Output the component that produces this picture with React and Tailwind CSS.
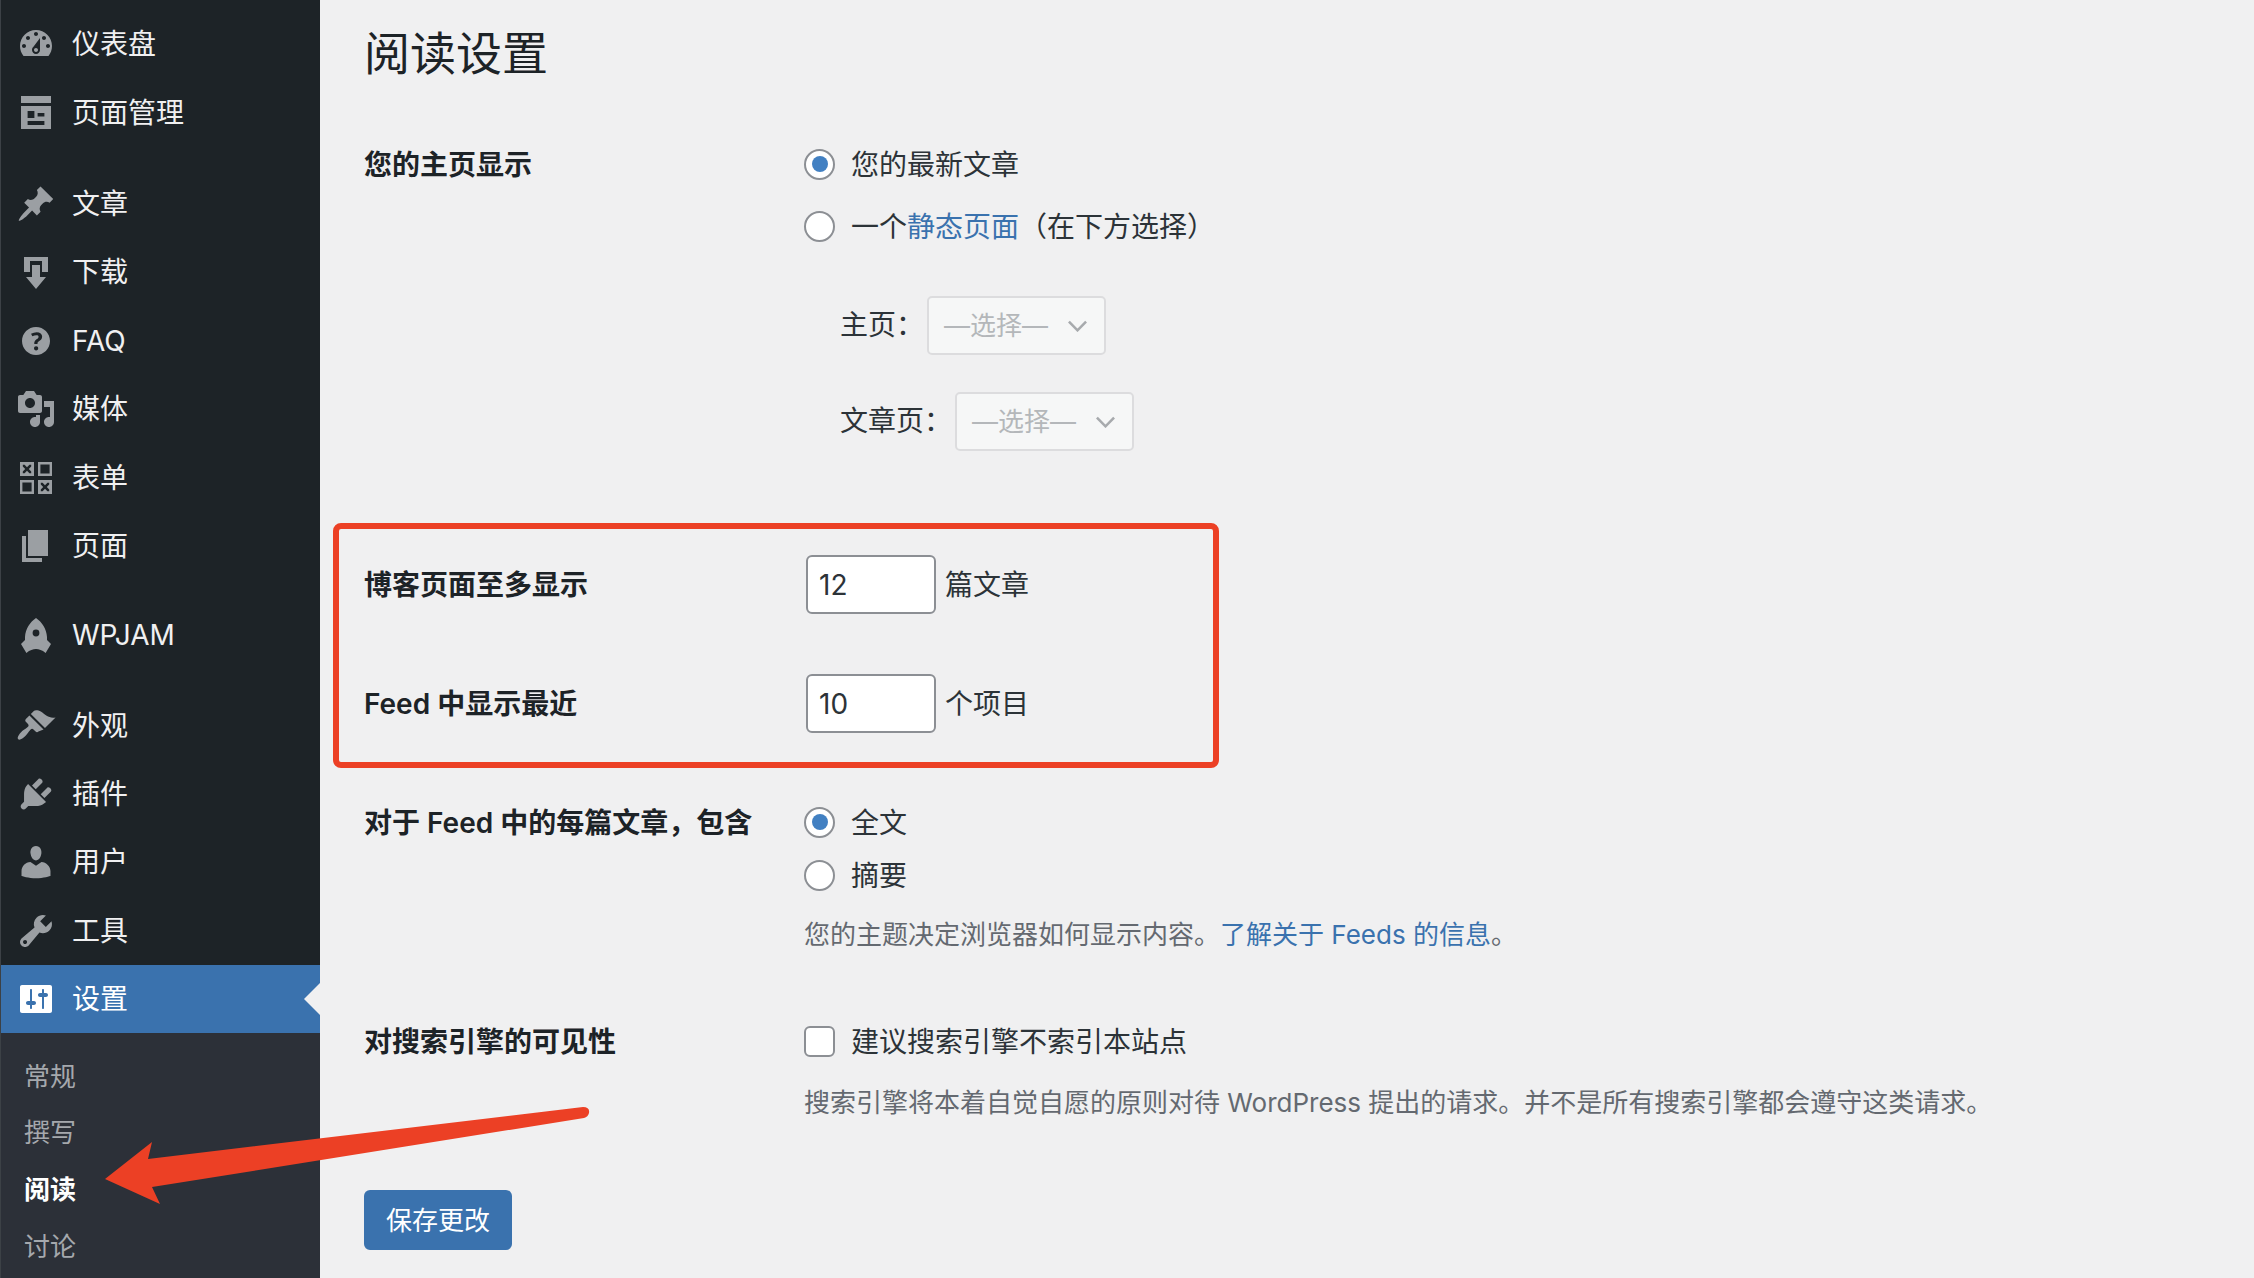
import React from 'react';

const icons = {
  dashboard: (
    <path fillRule="evenodd" d="M3.76 16h12.48c1.1-1.37 1.76-3.11 1.76-5 0-4.42-3.58-8-8-8s-8 3.58-8 8c0 1.89.66 3.63 1.76 5zM10 4c.55 0 1 .45 1 1s-.45 1-1 1-1-.45-1-1 .45-1 1-1zM6 6c.55 0 1 .45 1 1s-.45 1-1 1-1-.45-1-1 .45-1 1-1zm8 0c.55 0 1 .45 1 1s-.45 1-1 1-1-.45-1-1 .45-1 1-1zm-5.37 5.55L12 7v6c0 1.1-.9 2-2 2s-2-.9-2-2c0-.57.24-1.08.63-1.45zM4 10c.55 0 1 .45 1 1s-.45 1-1 1-1-.45-1-1 .45-1 1-1zm12 0c.55 0 1 .45 1 1s-.45 1-1 1-1-.45-1-1 .45-1 1-1zm-5 3c0-.55-.45-1-1-1s-1 .45-1 1 .45 1 1 1 1-.45 1-1z" />
  ),
  manager: (
    <path fillRule="evenodd" d="M2.5 1.5h15V5h-15zM2.5 6.5h15V18h-15zM5.8 9v3.5h3.4V9zM10.8 10v1.7h3.4V10zM5.8 14v2h8.4v-2z" />
  ),
  pin: (
    <path d="M10.44 3.02l1.82-1.82 6.36 6.35-1.83 1.82c-1.05-.68-2.48-.57-3.41.36l-.75.75c-.92.93-1.04 2.35-.35 3.41l-1.83 1.82-2.41-2.41-2.8 2.79c-.42.42-3.38 2.71-3.8 2.29s1.86-3.39 2.28-3.81l2.79-2.79L4.1 9.36l1.83-1.82c1.05.69 2.48.57 3.4-.36l.75-.75c.93-.92 1.05-2.35.36-3.41z" />
  ),
  download: (
    <path d="M4 2.5h12V10h-3V4.5H7V10H4zM8 6.5h4v6h3l-5 6-5-6h3z" />
  ),
  help: (
    <path fillRule="evenodd" d="M17 10c0-3.87-3.13-7-7-7s-7 3.13-7 7 3.13 7 7 7 7-3.13 7-7zm-6.3 1.48H9.14v-.43c0-.38.08-.7.24-.98s.46-.57.88-.89c.41-.29.68-.53.81-.71.14-.18.2-.39.2-.62 0-.25-.09-.44-.28-.58-.19-.13-.45-.19-.79-.19-.59 0-1.26.19-2.03.58l-.64-1.28c.89-.5 1.84-.75 2.84-.75.82 0 1.47.2 1.96.59.48.4.73.92.73 1.58 0 .44-.1.82-.3 1.14-.2.33-.58.69-1.14 1.09-.38.28-.62.49-.72.64-.1.15-.15.34-.15.58v.23zm-1.41 2.95c-.19-.18-.28-.44-.28-.77 0-.35.09-.61.27-.79s.44-.27.78-.27c.33 0 .59.09.77.27.18.19.27.45.27.79 0 .33-.09.58-.27.77-.19.19-.45.28-.77.28-.33 0-.59-.09-.77-.28z" />
  ),
  media: (
    <path fillRule="evenodd" d="M13 11V4c0-.55-.45-1-1-1h-1.67L9 1H5L3.67 3H2c-.55 0-1 .45-1 1v7c0 .55.45 1 1 1h10c.55 0 1-.45 1-1zM7 4.5c1.38 0 2.5 1.12 2.5 2.5S8.38 9.5 7 9.5 4.5 8.38 4.5 7 5.62 4.5 7 4.5zM14 6h5v10.5c0 1.38-1.12 2.5-2.5 2.5S14 17.88 14 16.5s1.12-2.5 2.5-2.5c.17 0 .34.02.5.05V9h-3V6zm-4 8.05V13h2v3.5c0 1.38-1.12 2.5-2.5 2.5S7 17.88 7 16.5 8.12 14 9.5 14c.17 0 .34.02.5.05z" />
  ),
  forms: (
    <>
      <path fillRule="evenodd" d="M2 2h7v7H2zM3.4 3.4v.9L4.6 5.5 3.4 6.7v.9h.9l1.2-1.2 1.2 1.2h.9v-.9L6.4 5.5l1.2-1.2v-.9h-.9L5.5 4.6 4.3 3.4zM11 11h7v7h-7zM12.4 12.4v.9l1.2 1.2-1.2 1.2v.9h.9l1.2-1.2 1.2 1.2h.9v-.9l-1.2-1.2 1.2-1.2v-.9h-.9l-1.2 1.2-1.2-1.2z" />
      <path fillRule="evenodd" d="M11 2h7v7h-7zM12.2 3.2v4.6h4.6V3.2zM2 11h7v7H2zM3.2 12.2v4.6h4.6v-4.6z" />
    </>
  ),
  page: <path d="M6 15V2h10v13H6zm-1 1h8v2H3V5h2v11z" />,
  rocket: (
    <path fillRule="evenodd" d="M10 1.5c3 2 5.3 5.5 5.5 9.5v1.5l2 2L14.8 19c-1.800-1.500-3.300-2-4.800-2s-3 .5-4.800 2L2.500 14.500l2-2V11C4.700 7 7 3.500 10 1.500zM10 7.300a1.700 1.700 0 1 0 0 3.400 1.700 1.700 0 0 0 0-3.400z" />
  ),
  brush: (
    <path d="M14.48 11.06L7.41 3.99l1.5-1.5c.5-.56 2.3-.47 3.51.32 1.21.8 1.43 1.28 2.91 2.1 1.18.64 2.45 1.26 4.45.85zm-.71.71L6.7 4.7 4.93 6.47c-.39.39-.39 1.02 0 1.41l1.06 1.06c.39.39.39 1.03 0 1.42-.6.6-1.43 1.11-2.21 1.69-.35.26-.7.53-1.01.84-1.34 1.34-2.37 3-1.67 3.71.71.7 2.36-.33 3.7-1.67.31-.31.58-.66.84-1.01.58-.78 1.09-1.61 1.69-2.21.39-.39 1.02-.39 1.41 0l1.06 1.06c.39.39 1.02.39 1.41 0z" />
  ),
  plugin: (
    <path d="M13.11 4.36L9.87 7.6 8 5.73l3.24-3.24c.35-.34 1.05-.2 1.56.32.52.51.66 1.21.31 1.55zm-8 1.77l.91-1.12 9.01 9.01-1.19.84c-.71.71-2.63 1.16-3.82 1.16H6.14L4.9 17.26c-.59.59-1.54.59-2.12 0-.59-.58-.59-1.53 0-2.12l1.24-1.24v-3.88c0-1.13.4-3.19 1.09-3.89zm7.26 3.97l3.24-3.24c.34-.35 1.04-.21 1.55.31.52.51.66 1.21.31 1.55l-3.24 3.25z" />
  ),
  user: (
    <path d="M10 9.25c-2.27 0-2.73-3.44-2.73-3.44C7 4.02 7.82 2 9.97 2c2.16 0 2.98 2.02 2.71 3.81 0 0-.41 3.44-2.68 3.44zm0 2.57L12.72 10c2.39 0 4.52 2.33 4.52 4.53v2.49s-3.65 1.13-7.24 1.13c-3.65 0-7.24-1.13-7.24-1.13v-2.49c0-2.25 1.94-4.48 4.47-4.48z" />
  ),
  tools: (
    <path fillRule="evenodd" d="M16.68 9.77c-1.34 1.34-3.3 1.67-4.95.99l-5.41 6.52c-.99.99-2.59.99-3.58 0s-.99-2.59 0-3.57l6.52-5.42c-.68-1.65-.35-3.61.99-4.95 1.28-1.28 3.12-1.62 4.72-1.06l-2.89 2.89 2.82 2.82 2.86-2.87c.53 1.58.18 3.39-1.08 4.65zM3.81 16.21c.4.39 1.04.39 1.43 0 .4-.4.4-1.04 0-1.43-.39-.4-1.03-.4-1.43 0-.39.39-.39 1.03 0 1.43z" />
  ),
  settings: (
    <path fillRule="evenodd" d="M18 16V4c0-.55-.45-1-1-1H3c-.55 0-1 .45-1 1v12c0 .55.45 1 1 1h14c.55 0 1-.45 1-1zM8 11h1c.55 0 1 .45 1 1s-.45 1-1 1H8v1.5c0 .28-.22.5-.5.5s-.5-.22-.5-.5V13H6c-.55 0-1-.45-1-1s.45-1 1-1h1V5.500c0-.28.22-.5.5-.5s.5.22.5.5V11zm5-2h-1c-.55 0-1-.45-1-1s.45-1 1-1h1V5.500c0-.28.22-.5.5-.5s.5.22.5.5V7h1c.55 0 1 .45 1 1s-.45 1-1 1h-1v5.500c0 .28-.22.5-.5.5s-.5-.22-.5-.5V9z" />
  ),
};

const MenuItem = ({ icon, label, active }) => (
  <div className={`relative flex h-[68.4px] items-center gap-[16px] pl-[15px] ${active ? 'bg-[#3a72ae] text-white' : 'text-[#f0f0f1]'}`}>
    <svg viewBox="0 0 20 20" className={`h-10 w-10 shrink-0 ${active ? 'fill-white' : 'fill-[#9b9fa3]'}`}>
      {icons[icon]}
    </svg>
    <span>{label}</span>
    {active && (
      <span className="absolute right-0 top-[18px] h-0 w-0 border-y-[16px] border-r-[16px] border-y-transparent border-r-[#f0f0f1]" />
    )}
  </div>
);

const SubItem = ({ label, current }) => (
  <div className={`flex h-[56.6px] items-center pl-[23px] text-[26px] ${current ? 'font-bold text-white' : 'text-[#a5a8ad]'}`}>
    {label}
  </div>
);

const Radio = ({ checked }) => (
  <span className="flex h-[31px] w-[31px] shrink-0 items-center justify-center rounded-full border-2 border-[#8c8f94] bg-white">
    {checked && <span className="h-[16px] w-[16px] rounded-full bg-[#4280c2]" />}
  </span>
);

const Option = ({ checked, className, children }) => (
  <div className={`flex h-10 items-center gap-[16px] ${className}`}>
    <Radio checked={checked} />
    <span className="pt-[2px]">{children}</span>
  </div>
);

const PageSelect = ({ label, className }) => (
  <div className={`flex items-center pl-[36px] ${className}`}>
    <span className="mr-[3px] pb-[2px]">{label}</span>
    <div className="flex h-[59px] w-[179px] items-center justify-between rounded-[5px] border-2 border-[#dcdcde] bg-[#f6f7f7] pl-[15px] pr-[16px] text-[26px] text-[#b4b7ba]">
      <span>—选择—</span>
      <svg viewBox="0 0 24 14" className="h-[12px] w-[21px] fill-none stroke-[#a7aaad] stroke-[3]">
        <path d="M2 2l10 10L22 2" />
      </svg>
    </div>
  </div>
);

const NumberRow = ({ label, value, unit, className }) => (
  <div className={`flex h-[59px] items-center ${className}`}>
    <div className="w-[442px] pt-px font-semibold text-[#1d2327]">{label}</div>
    <input
      readOnly
      value={value}
      className="h-[59px] w-[130px] rounded-[6px] border-2 border-[#8c8f94] bg-white px-[11px] text-[28px] text-[#2c3338] outline-none"
    />
    <span className="ml-[9px] pt-px">{unit}</span>
  </div>
);

const App = () => (
  <div className="relative flex h-[1278px] w-full overflow-hidden bg-[#f0f0f1] text-[28px] leading-[40px] text-[#2c3338] [font-family:Inter,'Noto_Sans_CJK_SC',sans-serif]">
    {/* Sidebar */}
    <aside className="w-[320px] shrink-0 border-l border-[#3c4146] bg-[#1d2327] pt-[10px]">
      <MenuItem icon="dashboard" label="仪表盘" />
      <MenuItem icon="manager" label="页面管理" />
      <div className="mt-[23px]">
        <MenuItem icon="pin" label="文章" />
        <MenuItem icon="download" label="下载" />
        <MenuItem icon="help" label="FAQ" />
        <MenuItem icon="media" label="媒体" />
        <MenuItem icon="forms" label="表单" />
        <MenuItem icon="page" label="页面" />
      </div>
      <div className="mt-[21px]">
        <MenuItem icon="rocket" label="WPJAM" />
      </div>
      <div className="mt-[22px]">
        <MenuItem icon="brush" label="外观" />
        <MenuItem icon="plugin" label="插件" />
        <MenuItem icon="user" label="用户" />
        <MenuItem icon="tools" label="工具" />
        <MenuItem icon="settings" label="设置" active />
      </div>
      <div className="h-[300px] bg-[#2c3038] pt-[15px]">
        <SubItem label="常规" />
        <SubItem label="撰写" />
        <SubItem label="阅读" current />
        <SubItem label="讨论" />
      </div>
    </aside>

    {/* Main */}
    <main className="min-w-0 flex-1 pl-[44px]">
      <h1 className="flex h-[106px] items-center text-[46px] font-normal text-[#1d2327]">阅读设置</h1>

      <div className="mt-[38px] flex">
        <div className="h-10 w-[440px] pt-px font-semibold text-[#1d2327]">您的主页显示</div>
        <div>
          <Option checked>您的最新文章</Option>
          <Option className="mt-[22px]">
            一个<a className="text-[#3a72ae]">静态页面</a>（在下方选择）
          </Option>
          <PageSelect label="主页：" className="mt-[50px]" />
          <PageSelect label="文章页：" className="mt-[37px]" />
        </div>
      </div>

      <NumberRow label="博客页面至多显示" value="12" unit="篇文章" className="mt-[104px]" />
      <NumberRow label="Feed 中显示最近" value="10" unit="个项目" className="mt-[60px]" />

      <div className="mt-[69px] flex">
        <div className="h-10 w-[440px] pt-px font-semibold text-[#1d2327]">对于 Feed 中的每篇文章，包含</div>
        <div>
          <Option checked>全文</Option>
          <Option className="mt-[13px]">摘要</Option>
          <p className="mt-[20px] text-[26px] text-[#646970]">
            您的主题决定浏览器如何显示内容。<a className="text-[#3a72ae]">了解关于 Feeds 的信息</a>。
          </p>
        </div>
      </div>

      <div className="mt-[66px] flex">
        <div className="h-10 w-[440px] pt-px font-semibold text-[#1d2327]">对搜索引擎的可见性</div>
        <div>
          <div className="flex h-10 items-center gap-[16px]">
            <span className="h-[31px] w-[31px] rounded-[6px] border-2 border-[#8c8f94] bg-white" />
            <span className="pt-[2px]">建议搜索引擎不索引本站点</span>
          </div>
          <p className="mt-[22px] text-[26px] text-[#646970]">
            搜索引擎将本着自觉自愿的原则对待 WordPress 提出的请求。并不是所有搜索引擎都会遵守这类请求。
          </p>
        </div>
      </div>

      <button className="mt-[67px] h-[60px] w-[148px] rounded-[6px] bg-[#3a72ae] pt-[2px] text-[26px] text-white">保存更改</button>
    </main>

    {/* Annotation drawn on top of the screenshot */}
    <div className="pointer-events-none absolute left-[333px] top-[523px] h-[245px] w-[886px] rounded-[8px] border-[6px] border-[#ec4025]" />
    <svg viewBox="0 0 2254 1278" className="pointer-events-none absolute left-0 top-0 h-[1278px] w-[2254px]">
      <path
        d="M105 1179L152 1142L148 1159L583 1107Q590 1107 589 1113Q588 1117 584 1118L152 1187L160 1204Z"
        fill="#ec4025"
      />
    </svg>
  </div>
);

export default App;
